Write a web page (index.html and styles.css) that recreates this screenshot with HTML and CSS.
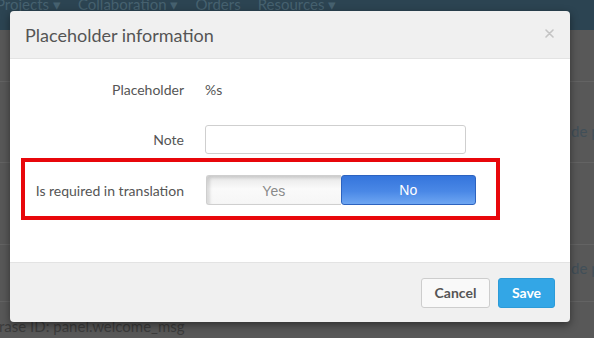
FILE: index.html
```html
<!DOCTYPE html>
<html>
<head>
<meta charset="utf-8">
<link rel="stylesheet" href="styles.css">
</head>
<body>
<div class="page">
  <div class="nav">
    <span class="nav-item">Projects ▾</span>
    <span class="nav-item">Collaboration ▾</span>
    <span class="nav-item">Orders</span>
    <span class="nav-item">Resources ▾</span>
  </div>
  <div class="bg-row r1"></div>
  <div class="bg-row r2"><span class="bg-right">de page</span></div>
  <div class="bg-row r3"></div>
  <div class="bg-row r4"><span class="bg-right">de page</span></div>
  <div class="bg-row r5"><span class="bg-left">rase ID: panel.welcome_msg</span></div>
</div>

<div class="modal">
  <div class="modal-header">
    <h4 class="modal-title">Placeholder information</h4>
    <svg class="close" width="9" height="9" viewBox="0 0 9 9"><path d="M1 1L8 8M8 1L1 8" stroke="#c4c4c4" stroke-width="1.6" stroke-linecap="round"/></svg>
  </div>
  <div class="modal-body">
    <div class="row row-1">
      <div class="label">Placeholder</div>
      <div class="value">%s</div>
    </div>
    <div class="row row-2">
      <div class="label">Note</div>
      <input class="input" type="text">
    </div>
    <div class="row row-3 highlight">
      <div class="label">Is required in translation</div>
      <div class="toggle">
        <span class="seg seg-yes">Yes</span>
        <span class="seg seg-no">No</span>
      </div>
    </div>
  </div>
  <div class="modal-footer">
    <button class="btn btn-cancel">Cancel</button>
    <button class="btn btn-save">Save</button>
  </div>
</div>
</body>
</html>
```

FILE: styles.css
```css
html, body {
  margin: 0;
  padding: 0;
}
body {
  width: 594px;
  height: 338px;
  overflow: hidden;
  background: #585858;
  font-family: Lato, "Open Sans", sans-serif;
  position: relative;
}
.page {
  width: 594px;
}
.nav {
  height: 30px;
  background: #2c4452;
  display: flex;
  gap: 17px;
  margin-left: -4px;
  overflow: hidden;
}
.nav-item {
  color: #46616f;
  font-size: 15px;
  line-height: 16px;
  margin-top: -4px;
}
.bg-row {
  border-bottom: 1px solid #636363;
  position: relative;
  font-size: 15px;
  white-space: nowrap;
  overflow: hidden;
}
.r1 { height: 51px; }
.r2 { height: 80px; }
.r3 { height: 81px; }
.r4 { height: 56px; }
.r5 { height: 40px; border-bottom: 0; }
.bg-right {
  display: block;
  padding-left: 571px;
  padding-top: 40px;
  color: #414f58;
}
.r4 .bg-right { padding-top: 14px; }
.bg-left {
  display: block;
  margin-left: -1px;
  padding-top: 15px;
  color: #3c3c3c;
}

.modal {
  position: absolute;
  left: 10px;
  top: 11px;
  width: 560px;
  border-radius: 4px;
  box-shadow: 0 3px 9px rgba(0,0,0,0.45);
  overflow: hidden;
}
.modal-header {
  box-sizing: border-box;
  height: 48px;
  background: #f0f0f0;
  border-bottom: 1px solid #e3e3e3;
  padding: 0 16px 0 15px;
  display: flex;
  align-items: center;
  justify-content: space-between;
}
.modal-title {
  margin: 0;
  font-size: 18px;
  font-weight: 400;
  color: #555;
  padding-top: 1px;
}
.close {
  display: block;
  margin-top: -2px;
}
.modal-body {
  background: #fff;
  padding: 11px 0 42px 11px;
}
.row {
  width: 471px;
  border: 4px solid transparent;
  display: grid;
  grid-template-columns: 159px 271px;
  column-gap: 21px;
  align-items: center;
  font-size: 14px;
  color: #555;
}
.row-1 { height: 30px; }
.row-2 { margin-top: 13px; height: 29px; }
.row-3 { padding: 13px 0 11px; height: 30px; }
.highlight { border-color: #e8070b; }
.label {
  text-align: right;
}
.input {
  box-sizing: border-box;
  width: 261px;
  height: 29px;
  margin: 0;
  border: 1px solid #cfcfcf;
  border-radius: 3px;
  background: #fff;
  padding: 0 8px;
}
.toggle {
  display: flex;
  width: 270px;
  height: 30px;
  margin-left: 1px;
  font-family: "Liberation Sans", Arial, sans-serif;
  font-size: 14px;
}
.seg {
  box-sizing: border-box;
  flex: 1;
  display: flex;
  align-items: center;
  justify-content: center;
  height: 30px;
}
.seg-yes {
  color: #8a8a8a;
  border: 1px solid #cfcfcf;
  border-right: 0;
  border-radius: 3px 0 0 3px;
  background: linear-gradient(#e6e6e6, #fafafa 45%, #f6f6f6);
  box-shadow: inset 3px 2px 3px rgba(0,0,0,0.12);
  padding-top: 1px;
}
.seg-no {
  color: #fff;
  border: 1px solid #2d63bf;
  border-radius: 3px;
  background: linear-gradient(#3575dc, #4a88e6 55%, #6ea6f2);
}
.modal-footer {
  box-sizing: border-box;
  height: 60px;
  background: #f0f0f0;
  border-top: 1px solid #e3e3e3;
  padding: 0 15px;
  display: flex;
  align-items: center;
  justify-content: flex-end;
  gap: 8px;
}
.btn {
  box-sizing: border-box;
  height: 30px;
  border-radius: 3px;
  font-family: Lato, "Open Sans", sans-serif;
  font-size: 14px;
  font-weight: 700;
  padding: 0;
  margin: 0;
}
.btn-cancel {
  width: 69px;
  background: #f9f9f9;
  border: 1px solid #cdcdcd;
  color: #555;
}
.btn-save {
  width: 57px;
  background: #33a6e6;
  border: 1px solid #2c9bd8;
  color: #fff;
}
```
